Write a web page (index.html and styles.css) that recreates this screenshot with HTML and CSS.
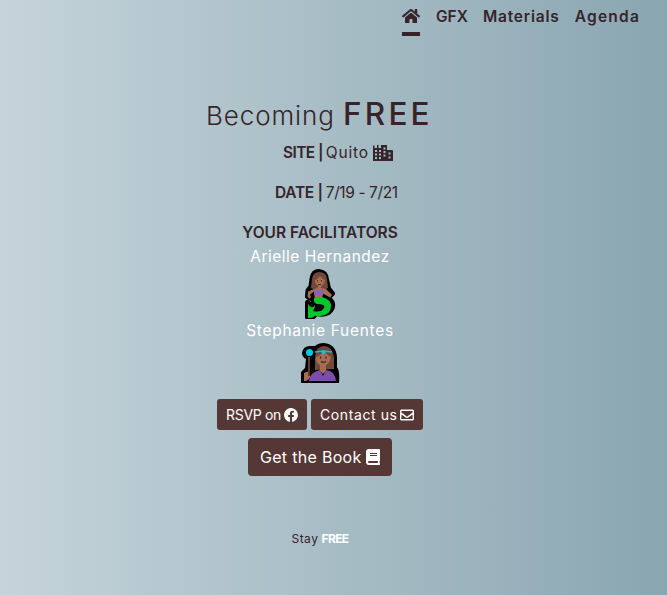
FILE: index.html
```html
<!DOCTYPE html>
<html lang="en">
<head>
<meta charset="utf-8">
<title>Becoming FREE</title>
<link rel="stylesheet" href="styles.css">
</head>
<body>
<nav class="nav">
  <a class="home" aria-label="Home"><svg width="18" height="16" viewBox="0 0 576 512"><path d="M280 148 96 300v164a16 16 0 0 0 16 16h112a16 16 0 0 0 16-16v-96a16 16 0 0 1 16-16h64a16 16 0 0 1 16 16v96a16 16 0 0 0 16 16h112a16 16 0 0 0 16-16V300L296 148a12 12 0 0 0-16 0zM572 251l-84-69V44a12 12 0 0 0-12-12h-56a12 12 0 0 0-12 12v72l-89-74a48 48 0 0 0-61 0L4 251a12 12 0 0 0-1 17l25 31a12 12 0 0 0 17 2L280 107a12 12 0 0 1 16 0l235 194a12 12 0 0 0 17-2l25-31a12 12 0 0 0-1-17z"/></svg></a>
  <a class="gfx">GFX</a><a class="materials">Materials</a><a class="agenda">Agenda</a>
</nav>
<main class="content">
  <h1 class="title"><span class="becoming">Becoming</span><span class="free">FREE</span></h1>
  <div class="row site"><b>SITE |</b><span>Quito</span><svg width="20" height="16" viewBox="0 0 20 16"><path fill-rule="evenodd" d="M0 4V.5h1.500V3H4V0h1.500v3H8V0h3v0h3v5h5q1 0 1 1v10H0zM2 5v2h2V5zm4 0v2h2V5zM2 8.500v2h2v-2zm4 0v2h2v-2zM2 12v2h2v-2zm4 0v2h2v-2zM10.500 2.500v2h2v-2zm0 3.500v2h2V6zm0 3.500v2h2v-2zM15.500 7.500v2h2v-2zm0 4v2h2v-2z"/></svg></div>
  <div class="row date"><b>DATE |</b><span>7/19 - 7/21</span></div>
  <h2 class="row heading">YOUR FACILITATORS</h2>
  <div class="row name arielle">Arielle Hernandez</div>
  <svg class="portrait" width="50" height="50" viewBox="295 268 50 50">
    <defs><path id="mermaid" d="M319 270.500q-6 0-7 7l-1 8-3 4-.5 6 3 2 3-2v7l-1.500 2-4.500-3v14.500l6-.5 3-3q6 2 12-1 5-4 4-9-1-4-6-6l-2-4 5 3 3-3-4-5-2-9q0-7-7.500-8z"/></defs>
    <use href="#mermaid" fill="#000" stroke="#000" stroke-width="5" stroke-linejoin="round"/>
    <path fill="#6f493e" d="M319 271q-6 0-7 7l-1 9 4 2h9l4-2-1-9q-1-7-8-7z"/>
    <path fill="#a66d50" d="M315 279q3-1 5-4 2 3 5 4-1 5-4 6v2l5 1 6 6-2 2.500-7-4-1 6-7 1-1-9-4 3 1 3-2 1-1.500-2 .5-5 10-4v-2q-3-1-3-5z"/>
    <path fill="#8763bf" d="M314.500 288.500l5 1 4-1v5l-9 .5z"/>
    <path fill="#00c82c" d="M314 297q4 0 8-1 10 3 9 10-1 8-10 9-4 1-6-.5-2 3-7 2.500v-14q2 4 5 3l2-2q0 3-2 6 8 2 11-3 2-3-4-4-7 1-6-6z"/>
    <path fill="none" stroke="#4a2b23" d="M317.500 279v1.500m4-1.500v1.500m-3.500 3h3"/>
  </svg>
  <div class="row name stephanie">Stephanie Fuentes</div>
  <svg class="portrait" width="50" height="41" viewBox="295 343 50 41">
    <path fill="#000" d="M315 346q3-3 9-3 12 1 13 14v10q3 4 2 16h-38v-11l4-4 1-9q-4-2-4-6 1-7 8-7z"/>
    <path fill="#6f493e" d="M315 370v-13q1-11 9-11t10 11v12z"/>
    <path fill="#a66d50" d="M316 357q5-2 8-6 3 4 7 6-1 6-5 8v6l-3 3-3-3v-6q-4-2-4-8zM304 373q5-3 6 1 1 5-4 7h-2z"/>
    <path fill="#7e4da8" d="M309 381q0-8 11-11l3 6 3-6q9 1 10 11z"/>
    <path stroke="#6b3828" stroke-width="2" d="M309 357v19"/>
    <path stroke="#18b9df" stroke-width="1.500" d="M315 352q8-1.500 17 0" fill="none"/><circle cx="309.500" cy="352.500" r="3.500" fill="#00c9ed"/><circle cx="323.500" cy="352" r="2" fill="#00c9ed"/>
    <path fill="none" stroke="#35211e" stroke-width="1.200" d="M320.500 356.500v2m5.500-2v2m-5 3q2.500 1.500 5 0"/>
  </svg>
  <div class="buttons">
    <a class="btn rsvp"><span>RSVP on</span><svg width="14" height="14" viewBox="0 0 14 14"><path d="M14 7A7 7 0 1 0 5.900 13.900V9H4.100V7h1.800V5.500c0-1.700 1-2.700 2.600-2.700l1.600.1v1.700h-.9c-.9 0-1.100.5-1.100 1.100V7H10l-.3 2H8.100v4.900A7 7 0 0 0 14 7z"/></svg></a>
    <a class="btn contact"><span>Contact us</span><svg width="14" height="14" viewBox="0 0 14 14"><path fill="none" stroke="#fff" stroke-width="1.400" d="M1.500 2.200h11q.8 0 .8.800v8q0 .8-.8.800h-11q-.8 0-.8-.8V3q0-.8.800-.8zM.7 4.900 6 8.900q1 .7 2 0l5.300-4"/></svg></a>
  </div>
  <a class="btn book"><span>Get the Book</span><svg width="14" height="16" viewBox="0 0 448 512"><path fill-rule="evenodd" d="M448 360V24a24 24 0 0 0-24-24H96A96 96 0 0 0 0 96v320a96 96 0 0 0 96 96h328a24 24 0 0 0 24-24v-16q0-12-9-18-6-35 0-75 9-7 9-19zM128 128h224v32H128zm0 64h224v32H128zm253 256H96a32 32 0 0 1 0-64h285q-4 32 0 64z"/></svg></a>
  <footer class="footer"><span>Stay</span><b>FREE</b></footer>
</main>
</body>
</html>
```

FILE: styles.css
```css
* { box-sizing: border-box; }
body {
  margin: 0;
  height: 595px;
  overflow: hidden;
  background: linear-gradient(90deg, #c5d4da 0%, #abc0c8 43%, #9bb3bd 72%, #89a6b1 100%);
  color: #36242a;
  font: 400 15.500px/24px Inter, sans-serif;
  white-space: nowrap;
}
svg { display: block; flex: none; fill: currentColor; }
.nav { display: flex; height: 36px; padding: 4px 27px 0 402px; font-weight: 600; line-height: 26px; }
.home { width: 18px; height: 32px; padding-top: 4px; margin-right: 16px; border-bottom: 4px solid #36242a; }
.gfx { width: 47px; }
.materials { width: 92px; letter-spacing: .8px; }
.agenda { letter-spacing: 1.200px; }
.content { width: 640px; display: flex; flex-direction: column; align-items: center; }
.title { display: flex; align-items: baseline; width: 228px; height: 40px; margin: 58px 0 0; font-weight: 400; line-height: 40px; }
.becoming { width: 137px; font-size: 26px; font-weight: 350; letter-spacing: .9px; }
.free { font-size: 31.500px; font-weight: 500; letter-spacing: 3.200px; }
.row { display: flex; align-items: center; height: 24px; margin: 0; font-size: 15.500px; }
.row b { font-weight: 600; }
.site { width: 110px; margin: 7px 0 0 36px; }
.site b, .date b { margin-right: 3px; }
.site b { letter-spacing: -.6px; }
.site span { letter-spacing: .8px; }
.site svg { margin-left: auto; }
.date { width: 123px; margin: 16px 0 0 33px; }
.date b { letter-spacing: -.3px; }
.date span { letter-spacing: -.4px; }
.heading { margin-top: 16px; font-weight: 600; }
.name { color: #fff; }
.arielle { letter-spacing: .5px; }
.stephanie { letter-spacing: .7px; }
.portrait { flex: none; }
.buttons { display: flex; gap: 4px; margin-top: 15px; }
.btn { display: flex; align-items: center; justify-content: space-between; height: 31px; padding: 0 9px; border-radius: 3px; background: #553735; color: #fff; font-size: 14px; }
.rsvp { width: 90px; letter-spacing: -.3px; }
.contact { width: 112px; letter-spacing: .6px; }
.book { width: 144px; height: 38px; margin-top: 8px; padding: 0 12px 1px; border-radius: 4px; font-size: 16px; letter-spacing: .3px; }
.footer { display: flex; gap: 3px; height: 18px; margin-top: 54px; font-size: 12px; line-height: 18px; }
.footer span { letter-spacing: .5px; }
.footer b { color: #fff; font-weight: 700; letter-spacing: -.6px; }
```
